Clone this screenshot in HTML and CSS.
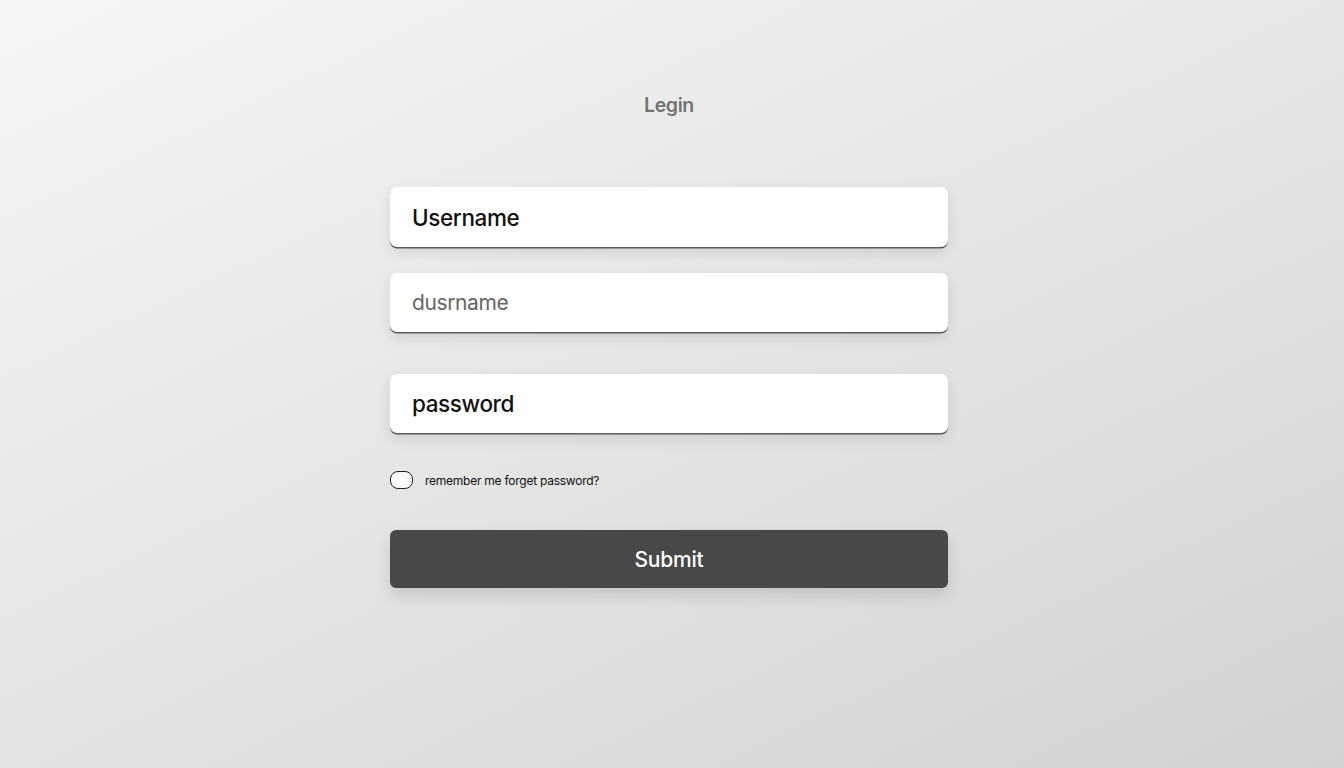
FILE: index.html
```html
<!DOCTYPE html>
<html>
<head>
<meta charset="utf-8">
<link rel="stylesheet" href="styles.css">
</head>
<body>
<main class="page">
  <h1 class="title">Legin</h1>
  <form class="form">
    <div class="field field-first"><span class="label">Username</span></div>
    <div class="field field-second"><span class="label muted">dusrname</span></div>
    <div class="field field-third"><span class="label">password</span></div>
    <div class="options">
      <span class="toggle"></span>
      <span class="options-text">remember me forget password?</span>
    </div>
    <button type="button" class="submit">Submit</button>
  </form>
</main>
</body>
</html>
```
FILE: styles.css
```css
html, body {
  margin: 0;
  padding: 0;
  height: 100%;
}
body {
  background: linear-gradient(155deg, #f6f6f4 0%, #e8e8e7 40%, #dcdcdc 75%, #d2d2d2 100%);
  font-family: Inter, "Liberation Sans", sans-serif;
  overflow: hidden;
}
.page {
  width: 1344px;
  height: 768px;
  padding-right: 6px;
  box-sizing: border-box;
  display: flex;
  flex-direction: column;
  align-items: center;
}
.title {
  margin: 93px 0 0 0;
  font-size: 19.5px;
  font-weight: 600;
  color: #737373;
  letter-spacing: -0.4px;
  line-height: 24px;
}
.form {
  margin-top: 70px;
  width: 558px;
  display: flex;
  flex-direction: column;
}
.field {
  height: 60px;
  background: #fff;
  border-radius: 7px;
  box-shadow: 0 1.5px 0 #5a5a5a, 0 6px 14px rgba(0,0,0,0.10);
  display: flex;
  align-items: center;
  padding-left: 22px;
  box-sizing: border-box;
}
.field-second {
  margin-top: 26px;
  height: 59px;
}
.field-third {
  margin-top: 42px;
  height: 59px;
}
.label {
  font-size: 22.5px;
  font-weight: 500;
  color: #111;
  letter-spacing: -0.4px;
}
.label.muted {
  color: #666;
  font-size: 21px;
  font-weight: 400;
}
.options {
  margin-top: 37px;
  display: flex;
  align-items: center;
  height: 20px;
}
.toggle {
  width: 21px;
  height: 16px;
  border: 1.5px solid #222;
  border-radius: 8px;
  background: #fafafa;
}
.options-text {
  margin-left: 12px;
  font-size: 12px;
  color: #111;
  letter-spacing: -0.25px;
}
.submit {
  margin-top: 40px;
  height: 58px;
  border: none;
  border-radius: 6px;
  background: #484848;
  color: #fff;
  font-family: Inter, "Liberation Sans", sans-serif;
  font-size: 21px;
  font-weight: 500;
  box-shadow: 0 8px 16px rgba(0,0,0,0.12);
  letter-spacing: -0.2px;
}
```
